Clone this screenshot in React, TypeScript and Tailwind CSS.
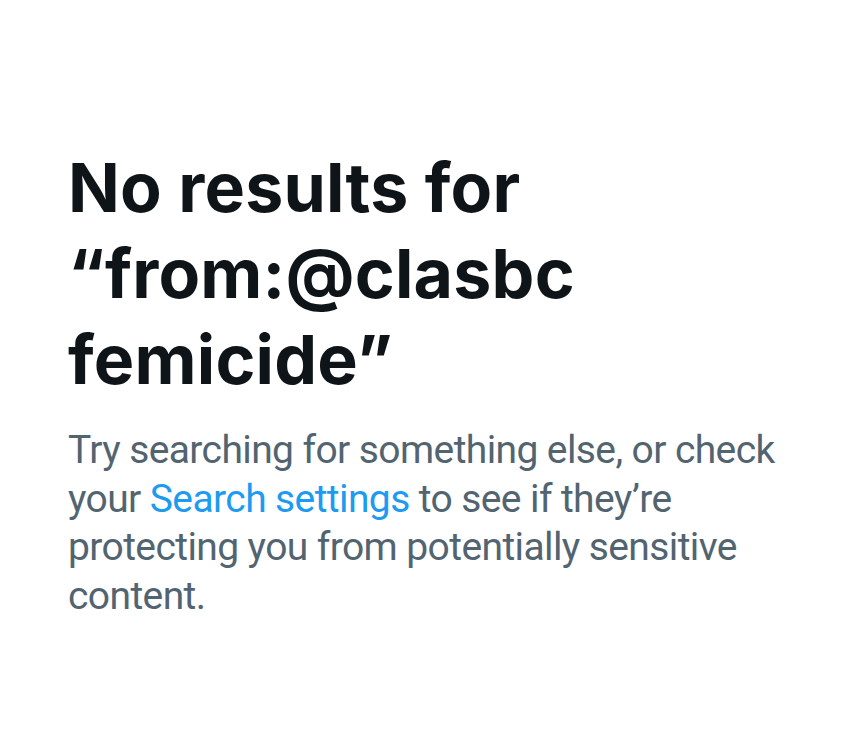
export default function App() {
  return (
    <div className="min-h-screen w-full bg-white">
      <div className="flex flex-col pl-[68px] pr-[40px] pt-[144px]">
        <h1 className="font-['Inter',sans-serif] text-[68px] leading-[86px] font-bold tracking-[0.2px] text-[#0f1419]">
          No results for
          <br />
          “from:@clasbc
          <br />
          femicide”
        </h1>
        <p className="mt-[24px] font-['Roboto',sans-serif] text-[39px] leading-[48.5px] tracking-[-0.6px] text-[#536471]">
          Try searching for something else, or check
          <br />
          your <span className="text-[#1d9bf0]">Search settings</span> to see if they’re
          <br />
          protecting you from potentially sensitive
          <br />
          content.
        </p>
      </div>
    </div>
  );
}
